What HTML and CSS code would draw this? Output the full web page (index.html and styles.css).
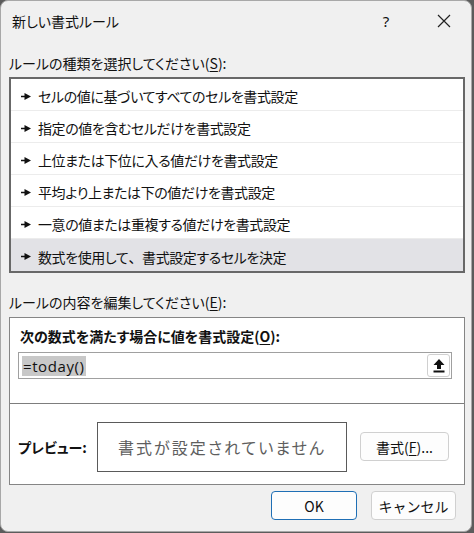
FILE: index.html
```html
<!DOCTYPE html>
<html lang="ja">
<head>
    <meta charset="UTF-8">
    <meta name="viewport" content="width=device-width, initial-scale=1.0">
    <title>新しい書式ルール</title>
    <link rel="stylesheet" href="styles.css">
</head>
<body>
<div class="dialog">
    <div class="titlebar">
        <span class="title">新しい書式ルール</span>
        <span class="title-btn help">?</span>
        <span class="title-btn close">
            <svg width="14" height="14" viewBox="0 0 14 14"><path d="M1 1L13 13M13 1L1 13" stroke="#222" stroke-width="1.2" fill="none"/></svg>
        </span>
    </div>

    <div class="content">
        <div class="label">ルールの種類を選択してください(<u>S</u>):</div>

        <ul class="rule-list">
            <li><svg class="mark" width="10" height="7" viewBox="0 0 10 7"><path d="M0 2.8H4V4.2H0Z M3.5 0L10 3.5L3.5 7Z" fill="#111"/></svg>セルの値に基づいてすべてのセルを書式設定</li>
            <li><svg class="mark" width="10" height="7" viewBox="0 0 10 7"><path d="M0 2.8H4V4.2H0Z M3.5 0L10 3.5L3.5 7Z" fill="#111"/></svg>指定の値を含むセルだけを書式設定</li>
            <li><svg class="mark" width="10" height="7" viewBox="0 0 10 7"><path d="M0 2.8H4V4.2H0Z M3.5 0L10 3.5L3.5 7Z" fill="#111"/></svg>上位または下位に入る値だけを書式設定</li>
            <li><svg class="mark" width="10" height="7" viewBox="0 0 10 7"><path d="M0 2.8H4V4.2H0Z M3.5 0L10 3.5L3.5 7Z" fill="#111"/></svg>平均より上または下の値だけを書式設定</li>
            <li><svg class="mark" width="10" height="7" viewBox="0 0 10 7"><path d="M0 2.8H4V4.2H0Z M3.5 0L10 3.5L3.5 7Z" fill="#111"/></svg>一意の値または重複する値だけを書式設定</li>
            <li class="selected"><svg class="mark" width="10" height="7" viewBox="0 0 10 7"><path d="M0 2.8H4V4.2H0Z M3.5 0L10 3.5L3.5 7Z" fill="#111"/></svg>数式を使用して<span class="comma">、</span>書式設定するセルを決定</li>
        </ul>

        <div class="label label-edit">ルールの内容を編集してください(<u>E</u>):</div>

        <div class="panel">
            <div class="panel-top">
                <div class="bold-label">次の数式を満たす場合に値を書式設定(<u>O</u>):</div>
                <div class="formula">
                    <span class="formula-text">=today()</span>
                    <span class="ref-btn">
                        <svg width="12" height="14" viewBox="0 0 12 14"><path d="M6 0L11.5 6H8V10H4V6H0.5Z" fill="#111"/><rect x="0.5" y="11.5" width="11" height="2" fill="#111"/></svg>
                    </span>
                </div>
            </div>
            <div class="panel-bottom">
                <span class="bold-label preview-label">プレビュー:</span>
                <div class="preview">書式が設定されていません</div>
                <button class="btn format-btn">書式(<u>F</u>)...</button>
            </div>
        </div>

        <div class="footer">
            <button class="btn ok">OK</button>
            <button class="btn cancel">キャンセル</button>
        </div>
    </div>
</div>
</body>
</html>
```

FILE: styles.css
```css
body {
    margin: 0;
    background: #5c5c5c;
    font-family: "Noto Sans CJK JP", "Noto Sans", sans-serif;
    font-feature-settings: "palt";
    color: #111;
}

.dialog {
    width: 472px;
    height: 532px;
    box-sizing: border-box;
    background: #f0f0f0;
    border: 1px solid #a8a8a8;
    border-radius: 8px;
    display: flex;
    flex-direction: column;
}

.titlebar {
    height: 39px;
    display: flex;
    align-items: center;
    padding-left: 11px;
}
.title { font-size: 14px; flex: 1; }
.title-btn {
    width: 46px;
    text-align: center;
    font-size: 15px;
    font-family: "Noto Sans", sans-serif;
}
.help { margin-right: 12px; }
.close { display: flex; justify-content: center; margin-right: 4px; }

.content { padding: 13px 14px 0 8px; }

.label {
    font-size: 14px;
    line-height: 20px;
}
u { text-decoration-thickness: 1px; text-underline-offset: 2px; }

.rule-list {
    list-style: none;
    margin: 4px 0 0;
    padding: 0;
    width: 456px;
    box-sizing: border-box;
    border: 2px solid #686868;
    background: #fff;
}
.rule-list li {
    height: 32px;
    box-sizing: border-box;
    border-bottom: 1px solid #ececec;
    display: flex;
    align-items: center;
    padding: 3px 0 0 10px;
    font-size: 14px;
    letter-spacing: -0.4px;
}
.rule-list li:last-child { border-bottom: none; }
.rule-list li.selected { background: #e2e2e6; }
.mark { margin-right: 7px; flex-shrink: 0; }
/* 読点は全角幅のまま */
.comma { font-feature-settings: normal; }

.label-edit { margin-top: 19px; }

.panel {
    margin-top: 5px;
    width: 456px;
    height: 168px;
    box-sizing: border-box;
    border: 1px solid #858585;
    background: #fff;
    display: flex;
    flex-direction: column;
}
.panel-top {
    height: 86px;
    box-sizing: border-box;
    border-bottom: 1px solid #7d7d7d;
    padding: 8px 12px 0 8px;
}
.bold-label {
    font-size: 14px;
    font-weight: bold;
    line-height: 20px;
    padding-left: 2px;
}
.formula {
    margin-top: 6px;
    height: 27px;
    box-sizing: border-box;
    border: 1px solid #a0a0a0;
    display: flex;
    align-items: center;
    padding: 0 1px 0 3px;
}
.formula-text {
    display: inline-block;
    font-family: "Open Sans", sans-serif;
    font-size: 15px;
    letter-spacing: 0.6px;
    background: #c8c8c8;
    line-height: 20px;
    padding: 0 1px;
    margin-right: auto;
}
.ref-btn {
    width: 23px;
    height: 23px;
    box-sizing: border-box;
    border: 1px solid #d0d0d0;
    border-radius: 3px;
    display: flex;
    align-items: center;
    justify-content: center;
    background: #fff;
}

.panel-bottom {
    flex: 1;
    display: flex;
    align-items: center;
    padding: 5px 0 0 8px;
}
.preview-label { padding-left: 0; width: 79px; }
.preview {
    width: 250px;
    height: 50px;
    box-sizing: border-box;
    border: 1px solid #5a5a5a;
    display: flex;
    align-items: center;
    justify-content: center;
    font-size: 16px;
    letter-spacing: 2px;
    color: #5e5e5e;
}

.btn {
    font-family: "Noto Sans CJK JP", "Noto Sans", sans-serif;
    font-size: 14px;
    color: #111;
    background: #fdfdfd;
    border: 1px solid #d0d0d0;
    border-radius: 4px;
    padding: 0;
    height: 29px;
}
.format-btn { width: 89px; margin-left: 13px; }

.footer {
    display: flex;
    justify-content: flex-end;
    gap: 14px;
    margin-top: 6px;
}
.ok { width: 86px; border-color: #1f6fb5; }
.cancel { width: 85px; margin-right: 1px; }
```
